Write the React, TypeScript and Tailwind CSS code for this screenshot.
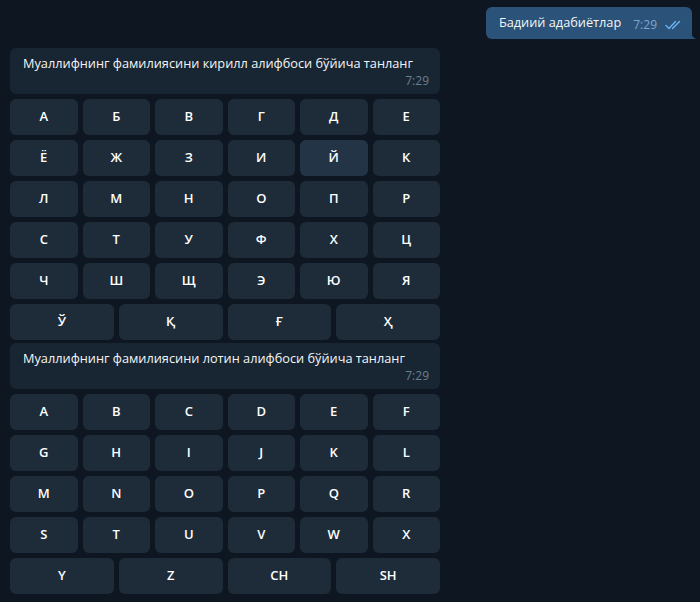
import React from 'react';

const cyrillic = [
  ['А', 'Б', 'В', 'Г', 'Д', 'Е'],
  ['Ё', 'Ж', 'З', 'И', 'Й', 'К'],
  ['Л', 'М', 'Н', 'О', 'П', 'Р'],
  ['С', 'Т', 'У', 'Ф', 'Х', 'Ц'],
  ['Ч', 'Ш', 'Щ', 'Э', 'Ю', 'Я'],
];
const cyrillicLast = ['Ў', 'Қ', 'Ғ', 'Ҳ'];

const latin = [
  ['A', 'B', 'C', 'D', 'E', 'F'],
  ['G', 'H', 'I', 'J', 'K', 'L'],
  ['M', 'N', 'O', 'P', 'Q', 'R'],
  ['S', 'T', 'U', 'V', 'W', 'X'],
];
const latinLast = ['Y', 'Z', 'CH', 'SH'];

const KeyButton: React.FC<{ label: string; hover?: boolean }> = ({ label, hover }) => (
  <button
    type="button"
    className={`h-[36px] rounded-[6px] flex items-center justify-center text-[13px] font-semibold text-white ${
      hover ? 'bg-[#243447]' : 'bg-[#1e2c3a]'
    }`}
  >
    {label}
  </button>
);

const Keyboard: React.FC<{ rows: string[][]; last: string[]; hoverKey?: string }> = ({ rows, last, hoverKey }) => (
  <div className="flex flex-col gap-[5px]">
    {rows.map((row, i) => (
      <div key={i} className="grid grid-cols-6 gap-[5px]">
        {row.map((k) => (
          <KeyButton key={k} label={k} hover={k === hoverKey} />
        ))}
      </div>
    ))}
    <div className="grid grid-cols-4 gap-[5px]">
      {last.map((k) => (
        <KeyButton key={k} label={k} />
      ))}
    </div>
  </div>
);

const IncomingBubble: React.FC<{ text: string }> = ({ text }) => (
  <div className="rounded-[6px] bg-[#182533] pl-[13px] pr-[11px] pt-[6px] pb-[5px]">
    <div className="text-[12.75px] leading-[18px] text-[#f5f5f5]">{text}</div>
    <div className="text-right text-[12px] leading-[17px] text-[#6d7f8f]">7:29</div>
  </div>
);

const App: React.FC = () => {
  return (
    <div
      className="w-[700px] h-[602px] overflow-hidden bg-[#0e1621] pt-[7px]"
      style={{ fontFamily: '"Open Sans", "Noto Sans", sans-serif' }}
    >
      {/* Outgoing message */}
      <div className="flex justify-end pr-[8px]">
        <div className="relative h-[32px] flex items-center rounded-[6px] rounded-br-none bg-[#2b5278] pl-[13px] pr-[9px]">
          <span className="text-[12.75px] text-[#f5f5f5]">Бадиий адабиётлар</span>
          <span className="ml-[12px] mt-[4px] text-[12px] text-[#7da8d3]">7:29</span>
          <svg className="ml-[8px] mt-[3px]" width="18" height="10" viewBox="0 0 18 10" fill="none">
            <path d="M1 5.5 L4 8.5 L10.5 1.5" stroke="#6ab3f3" strokeWidth="1.4" strokeLinecap="round" strokeLinejoin="round" />
            <path d="M7.5 8.5 L14.5 1.5" stroke="#6ab3f3" strokeWidth="1.4" strokeLinecap="round" />
          </svg>
          <svg className="absolute right-[-5px] bottom-0" width="6" height="8" viewBox="0 0 6 8">
            <path d="M0 0 C0 4 2 7 6 8 L0 8 Z" fill="#2b5278" />
          </svg>
        </div>
      </div>

      {/* Bot messages */}
      <div className="w-[430px] ml-[10px] mt-[9px] flex flex-col">
        <IncomingBubble text="Муаллифнинг фамилиясини кирилл алифбоси бўйича танланг" />
        <div className="mt-[5px]">
          <Keyboard rows={cyrillic} last={cyrillicLast} hoverKey="Й" />
        </div>
        <div className="mt-[3px]">
          <IncomingBubble text="Муаллифнинг фамилиясини лотин алифбоси бўйича танланг" />
        </div>
        <div className="mt-[5px]">
          <Keyboard rows={latin} last={latinLast} />
        </div>
      </div>
    </div>
  );
};

export default App;
